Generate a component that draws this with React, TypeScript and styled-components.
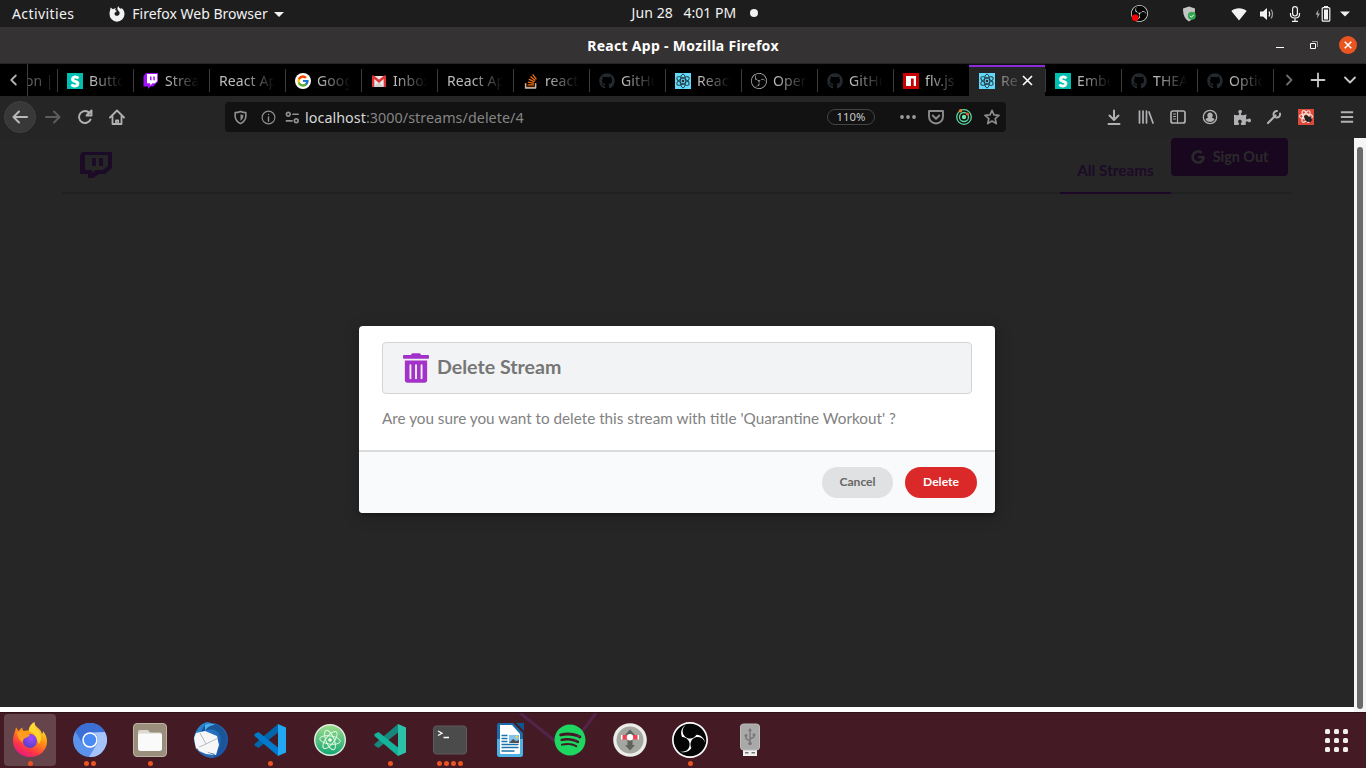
import React from "react";
import styled, { createGlobalStyle } from "styled-components";
import { FaGithub, FaGoogle, FaTrashAlt, FaPuzzlePiece, FaSpotify, FaStackOverflow } from "react-icons/fa";
import { FcGoogle } from "react-icons/fc";
import { SiObsstudio } from "react-icons/si";

const Global = createGlobalStyle`
  * { box-sizing: border-box; }
  body { margin: 0; background: #262626; overflow: hidden; }
  svg { display: block; flex: none; }
`;

const Desktop = styled.div`
  width: 1366px;
  height: 768px;
  display: flex;
  flex-direction: column;
  font-family: "Noto Sans", "Open Sans", sans-serif;
  color: #f2f2f2;
`;

/* ---------- system bar ---------- */
const SystemBar = styled.header`
  height: 27px;
  flex: none;
  display: grid;
  grid-template-columns: 1fr auto 1fr;
  align-items: center;
  background: #1d1d1d;
  font-size: 14px;
  line-height: 26px;
  white-space: pre;
`;
const SystemLeft = styled.div`
  display: flex;
  align-items: center;
  padding-left: 12px;
`;
const SystemLabel = styled.span<{ $w: number; $ls?: number }>`
  width: ${(p) => p.$w}px;
  letter-spacing: ${(p) => p.$ls ?? 0}px;
`;
const Clock = styled.div`
  display: flex;
  align-items: center;
  padding-left: 23px;
  padding-bottom: 1px;
`;
const ClockDot = styled.i`
  width: 8px;
  height: 8px;
  border-radius: 50%;
  background: #f2f2f2;
  margin-left: 13px;
`;
const Tray = styled.div`
  display: flex;
  justify-content: flex-end;
  align-items: center;
  padding-right: 2px;
`;
const TrayCell = styled.span<{ $w: number }>`
  width: ${(p) => p.$w}px;
  height: 27px;
  flex: none;
  display: flex;
  align-items: center;
  justify-content: center;
`;

/* ---------- window title ---------- */
const TitleBar = styled.div`
  height: 37px;
  flex: none;
  display: grid;
  grid-template-columns: 1fr auto 1fr;
  align-items: center;
  background: #353233;
  border-bottom: 1px solid #252323;
`;
const WindowTitle = styled.h1`
  grid-column: 2;
  margin: 0;
  font-size: 14px;
  font-weight: 700;
  color: #fff;
  letter-spacing: 0.3px;
`;
const WindowButtons = styled.div`
  display: flex;
  justify-content: flex-end;
  padding-right: 1px;
`;
const WindowButton = styled.span`
  width: 34px;
  display: flex;
  justify-content: center;
  align-items: center;
`;

/* ---------- tabs ---------- */
const TabStrip = styled.nav`
  height: 32px;
  flex: none;
  display: flex;
  background: #000;
  font-size: 14px;
`;
const StripButton = styled.span<{ $w: number; $line?: boolean }>`
  width: ${(p) => p.$w}px;
  flex: none;
  display: flex;
  align-items: center;
  justify-content: center;
  border-right: ${(p) => (p.$line ? "1px solid #3d3d3d" : "0")};
`;
const TabEnd = styled.span`
  width: 1px;
  height: 23px;
  margin-top: 5px;
  background: #3a3a3a;
`;
const PartialTab = styled.span`
  width: 29px;
  line-height: 33px;
  overflow: hidden;
  color: #5c5c5c;
  white-space: pre;
  text-indent: -3px;
  mask-image: linear-gradient(90deg, #000 30%, rgba(0, 0, 0, 0.4) 75%);
`;
const Tab = styled.div<{ $active?: boolean }>`
  width: 76px;
  flex: none;
  display: flex;
  align-items: center;
  gap: ${(p) => (p.$active ? 5 : 6)}px;
  padding: 0 ${(p) => (p.$active ? 12 : 9)}px 0 9px;
  background: ${(p) => (p.$active ? "#252525" : "linear-gradient(#3a3a3a, #3a3a3a) 0 5px / 1px 23px no-repeat #000")};
  box-shadow: ${(p) => (p.$active ? "inset 0 1px 0 #111, inset 0 3px 0 #8a2bd8" : "none")};
`;
const TabIcon = styled.span`
  width: 16px;
  height: 16px;
  margin-left: 1px;
  margin-top: 2px;
  flex: none;
  display: flex;
  align-items: center;
  justify-content: center;
`;
const TabTitle = styled.span<{ $bare?: boolean; $active?: boolean }>`
  flex: 1;
  min-width: 0;
  overflow: hidden;
  white-space: nowrap;
  line-height: 20px;
  padding-top: 1px;
  padding-left: ${(p) => (p.$bare || p.$active ? 1 : 0)}px;
  letter-spacing: 0.1px;
  color: #bdbdbd;
  mask-image: ${(p) =>
    p.$active
      ? "linear-gradient(90deg, rgba(0, 0, 0, 0.75), rgba(0, 0, 0, 0.25))"
      : "linear-gradient(90deg, #000 calc(100% - 32px), transparent calc(100% - 1px))"};
`;

/* ---------- toolbar ---------- */
const Toolbar = styled.div`
  height: 42px;
  flex: none;
  display: flex;
  align-items: center;
  background: #252525;
  padding-left: 4px;
`;
const Cell = styled.span<{ $w?: number }>`
  width: ${(p) => p.$w ?? 32}px;
  height: 32px;
  flex: none;
  display: flex;
  align-items: center;
  justify-content: center;
`;
const BackButton = styled(Cell)`
  border-radius: 50%;
  background: #383838;
  border: 1px solid #404040;
`;
const AddressBar = styled.div`
  width: 781px;
  height: 30px;
  flex: none;
  margin-left: 91px;
  display: flex;
  align-items: center;
  background: #121212;
  border-radius: 4px;
  padding-left: 3px;
`;
const Address = styled.span`
  flex: 1;
  margin-left: 5px;
  font-size: 14.3px;
  letter-spacing: 0.06px;
  color: #858585;
  white-space: nowrap;
  b { font-weight: 400; color: #d8d8d8; }
`;
const Zoom = styled.span`
  width: 48px;
  height: 16px;
  margin-right: 19px;
  border: 1px solid #444;
  border-radius: 8px;
  color: #c9c9c9;
  font-size: 11.3px;
  line-height: 14px;
  text-align: center;
`;
const Tools = styled.div`
  margin-left: 92px;
  display: flex;
`;

/* ---------- page ---------- */
const Viewport = styled.div`
  height: 574px;
  flex: none;
  display: flex;
  background: #fff;
`;
const Page = styled.main`
  position: relative;
  width: 1354px;
  height: 569px;
  background: #262626;
  font-family: Lato, sans-serif;
`;
const ScrollTrack = styled.div`
  width: 12px;
  background: #f5f5f5;
  padding: 9px 3px 3px;
`;
const ScrollThumb = styled.div`
  height: 562px;
  width: 6px;
  border-radius: 3px;
  background: #6b6b6b;
`;
const Menu = styled.div`
  width: 1230px;
  height: 56px;
  margin-left: 62px;
  padding: 0 4px 0 18px;
  border-bottom: 2px solid #212121;
  display: flex;
  align-items: flex-start;
`;
const Brand = styled.div`
  flex: 1;
  padding-top: 13px;
`;
const ActiveItem = styled.a`
  width: 111px;
  height: 56px;
  border-bottom: 2px solid #1c0826;
  color: #1c0b26;
  font-size: 15.3px;
  font-weight: 700;
  line-height: 20px;
  padding-top: 22px;
  text-align: center;
`;
const SignOut = styled.button`
  width: 117px;
  height: 38px;
  border: 0;
  border-radius: 4px;
  background: #190720;
  color: #2a2a2a;
  font: 700 14.4px Lato, sans-serif;
  display: flex;
  align-items: center;
  justify-content: center;
  gap: 8px;
  padding: 0 0 1px;
`;
const Dimmer = styled.div`
  position: absolute;
  inset: 0 0 6px;
  display: flex;
  align-items: center;
  justify-content: center;
`;
const Modal = styled.section`
  width: 636px;
  height: 187px;
  border-radius: 4px;
  overflow: hidden;
  background: #fff;
  box-shadow: 1px 3px 3px rgba(0, 0, 0, 0.2), 1px 3px 15px 2px rgba(0, 0, 0, 0.2);
  display: flex;
  flex-direction: column;
`;
const ModalBody = styled.div`
  flex: 1;
  padding: 16px 23px 0;
`;
const ModalHeader = styled.h2`
  margin: 0;
  height: 52px;
  border: 1px solid #d4d4d5;
  border-radius: 4px;
  background: #f2f3f5;
  color: #767676;
  font-size: 19.6px;
  font-weight: 700;
  display: flex;
  align-items: center;
  gap: 8px;
  padding-left: 20px;
  span { padding-bottom: 4px; }
`;
const TrashIcon = styled(FaTrashAlt)`
  width: 26px;
  height: 30px;
`;
const Question = styled.p`
  margin: 13px 0 0;
  font-size: 15.28px;
  line-height: 22px;
  color: #828282;
`;
const Actions = styled.footer`
  height: 63px;
  border-top: 2px solid #dadada;
  background: #f9fafb;
  display: flex;
  justify-content: flex-end;
  gap: 12px;
  padding: 15px 18px 0 0;
`;
const PillButton = styled.button<{ $danger?: boolean }>`
  width: ${(p) => (p.$danger ? 72 : 71)}px;
  height: 31px;
  border: 0;
  border-radius: 16px;
  padding: 0 0 3px;
  background: ${(p) => (p.$danger ? "#db2828" : "#e0e1e2")};
  color: ${(p) => (p.$danger ? "#fff" : "#666")};
  font: 700 12.1px Lato, sans-serif;
`;

/* ---------- dock ---------- */
const Dock = styled.footer`
  position: relative;
  height: 56px;
  flex: none;
  display: flex;
  align-items: flex-start;
  background: #441b24;
  border-top: 1px solid #2e1419;
  padding-top: 1px;
`;
const Streaks = styled.svg`
  position: absolute;
  left: 515px;
  top: 0;
`;
const DockItem = styled.div<{ $active?: boolean }>`
  position: relative;
  width: 52px;
  height: 52px;
  margin: 0 4px;
  border-radius: 4px;
  background: ${(p) => (p.$active ? "#66444b" : "transparent")};
  display: flex;
  align-items: center;
  justify-content: center;
`;
const Running = styled.span`
  position: absolute;
  left: 0;
  right: 0;
  bottom: 0;
  display: flex;
  justify-content: center;
  gap: 2px;
`;
const RunDot = styled.i`
  width: 5px;
  height: 5px;
  border-radius: 50%;
  background: #e95420;
`;
const AppsGrid = styled.div`
  margin: 15px 18px 0 auto;
  display: grid;
  grid-template-columns: repeat(3, 5px);
  gap: 4px;
  i { width: 5px; height: 5px; border-radius: 1.5px; background: #f3efee; }
`;

const S = (p: { s?: number; children: React.ReactNode }) => (
  <svg width={p.s ?? 16} height={p.s ?? 16} viewBox="0 0 16 16" fill="none" stroke="#b1b1b3" strokeWidth="2" strokeLinecap="round" strokeLinejoin="round">
    {p.children}
  </svg>
);

const Atom = ({ s, color, w = 1.2 }: { s: number; color: string; w?: number }) => (
  <svg width={s} height={s} viewBox="-12 -12 24 24" fill="none" stroke={color} strokeWidth={w}>
    {[0, 60, 120].map((a) => (
      <ellipse key={a} rx="11.300" ry="4.500" transform={`rotate(${a})`} />
    ))}
    <circle r="1.5" fill={color} />
  </svg>
);

const ReactFavicon = () => (
  <svg width="16" height="16" viewBox="-8 -8 16 16" fill="none" stroke="#20343c" strokeWidth="0.9">
    <path d="M-8-8H8V8H-8z" fill="#61dafb" stroke="none" />
    {[30, 90, 150].map((a) => (
      <ellipse key={a} rx="6.900" ry="2.700" transform={`rotate(${a})`} />
    ))}
    <circle r="1.3" fill="#20343c" stroke="none" />
  </svg>
);

const SemanticBox = styled.span`
  width: 16px;
  height: 16px;
  background: #00bfb0;
  color: #fff;
  font: 900 15px/16px Lato, sans-serif;
  text-align: center;
  -webkit-text-stroke: 0.8px #fff;
`;

const TwitchFavicon = () => (
  <svg width="16" height="16" viewBox="0 0 16 16">
    <path d="M3 0h12v8.500l-5 5H7.500L5 16v-2.500H0.500V3z" fill="#a010ff" />
    <path d="M4 1h10.200v7L12 10.300H9.500L7.200 12.500v-2.200H4z" fill="#fff" />
    <path d="M7 3.500h1.500v3.700H7zM10.300 3.500h1.500v3.700h-1.500z" fill="#a010ff" />
  </svg>
);

const GmailFavicon = () => (
  <svg width="16" height="16" viewBox="0 0 16 16">
    <path d="M1 3h14v11H1z" fill="#e8e8e8" />
    <path d="M3 14L8 9l5 5z" fill="#cfcfcf" />
    <path d="M1 2.500h2l5 4.300 5-4.300h2V14h-2.300V6L8 10 3.300 6v8H1z" fill="#dd3535" />
  </svg>
);

const GoogleFavicon = () => (
  <svg width="16" height="16" viewBox="0 0 16 16">
    <circle cx="8" cy="8" r="8" fill="#fff" />
    <g transform="translate(1.300 1.300)"><FcGoogle size={13.4} /></g>
  </svg>
);

const NpmFavicon = () => (
  <svg width="16" height="16" viewBox="0 0 16 16">
    <path d="M0 0h16v16H0z" fill="#cb0000" />
    <path d="M3 3h10v10h-2.300V5.500H8V13H3z" fill="#fff" />
  </svg>
);

const StackFavicon = () => (
  <svg width="16" height="16" viewBox="0 0 16 16">
    <FaStackOverflow size={16} color="#f2700f" />
    <path d="M2.500 10.500V15h10v-4.500" fill="none" stroke="#b8b8b8" strokeWidth="1.300" />
  </svg>
);

const ObsBadge = ({ s, color, rec }: { s: number; color: string; rec?: boolean }) => (
  <svg width={s} height={s} viewBox="0 0 24 24">
    <circle cx="12" cy="12" r="11.500" fill="#050505" />
    <SiObsstudio size={24} color={color} />
    {rec && <circle cx="6" cy="18" r="4.500" fill="#f00" />}
  </svg>
);

type TabInfo = { title: string; icon?: React.ReactNode };
const gh = <FaGithub size={16} color="#24292e" />;
const tabs: TabInfo[] = [
  { title: "Button", icon: <SemanticBox>S</SemanticBox> },
  { title: "Streams", icon: <TwitchFavicon /> },
  { title: "React App" },
  { title: "Google", icon: <GoogleFavicon /> },
  { title: "Inbox", icon: <GmailFavicon /> },
  { title: "React App" },
  { title: "reactj", icon: <StackFavicon /> },
  { title: "GitHub", icon: gh },
  { title: "React", icon: <ReactFavicon /> },
  { title: "Open", icon: <ObsBadge s={16} color="#b0b0b0" /> },
  { title: "GitHub", icon: gh },
  { title: "flv.js", icon: <NpmFavicon /> },
];
const tabsAfter: TabInfo[] = [
  { title: "Embe", icon: <SemanticBox>S</SemanticBox> },
  { title: "THEA", icon: gh },
  { title: "Optio", icon: gh },
];

const TabView = ({ title, icon }: TabInfo) => (
  <Tab>
    {icon && <TabIcon>{icon}</TabIcon>}
    <TabTitle $bare={!icon}>{title}</TabTitle>
  </Tab>
);

/* ---------- dock icons ---------- */
const Firefox = () => (
  <svg width="36" height="36" viewBox="0 0 36 36">
    <defs>
      <linearGradient id="ff" x1="0.8" y1="0" x2="0.25" y2="1">
        <stop offset="0" stopColor="#fff44f" />
        <stop offset="0.4" stopColor="#ff980e" />
        <stop offset="0.75" stopColor="#ff3647" />
        <stop offset="1" stopColor="#e31587" />
      </linearGradient>
      <radialGradient id="fp" cx="0.6" cy="0.3" r="0.7">
        <stop offset="0" stopColor="#a24bff" />
        <stop offset="1" stopColor="#5a3fc8" />
      </radialGradient>
    </defs>
    <path d="M4 5.500C5 6 6 8 6.500 9.500c1-1.800 2.500-3.200 4-4-.4 1.500.1 2.700 1 3.500 1.500-.5 3.500-.8 5-.3C17 5 19 2 22.500 0c0 3 1.500 4.500 4 6.500 2 1.700 3 3.300 3.500 5.500.8-.8 1-2 1-3 3 3.500 4 7 4 10.500C35 28.500 27.500 35 18 35S1 28 1 18.500C1 13.500 3 10 4 5.500z" fill="url(#ff)" />
    <path d="M22.500 0c-2 5 2 7 4.500 10s3 8 0 12l-5-10-5-3C17 5 19 2 22.500 0z" fill="#ffdf35" opacity=".8" />
    <circle cx="18" cy="19" r="7" fill="url(#fp)" />
    <path d="M5 11c3-3 6-3 8-1l5 3c-1.500 2-4 2.500-5.500 3.500-1.500 1-2 2-1.500 4C8 19 5 15 5 11z" fill="#ff9b1f" />
  </svg>
);
const Chromium = () => (
  <svg width="34" height="34" viewBox="-17 -17 34 34">
    <circle r="17" fill="#5b93ec" />
    <path d="M-14.700-8.500A17 17 0 0 1 14.700-8.500L14.700-7.500H0A8 8 0 0 0-7 4z" fill="#3b6fd6" />
    <path d="M14.900-8A17 17 0 0 1-1 17L7 4A8 8 0 0 0 3-7.500z" fill="#a5c5fa" />
    <circle r="7.700" fill="#fff" />
    <circle r="6.200" fill="#4a8af4" />
  </svg>
);
const Files = () => (
  <svg width="34" height="34" viewBox="0 0 34 34">
    <rect x=".5" y=".5" width="33" height="33" rx="3.500" fill="#9a8f7d" stroke="#bdb4a4" />
    <path d="M5 9q0-2 2-2h8l2 2.500h10q2 0 2 2V17H5z" fill="#ddd8d2" />
    <rect x="5" y="10.500" width="24" height="17.500" rx="2.500" fill="#fafafa" />
  </svg>
);
const Thunderbird = () => (
  <svg width="38" height="38" viewBox="0 0 38 38">
    <defs>
      <linearGradient id="tb" x1="0" y1="0" x2="1" y2="1">
        <stop offset="0" stopColor="#2b8fdc" />
        <stop offset="1" stopColor="#17499c" />
      </linearGradient>
    </defs>
    <path d="M6 9C8 5 12 1.500 17 1l3 1c9 0 17 7 17 16 0 11-7 18-15 19-4-.5-8-2-11-5L4 24C2 19 3 13 6 9z" fill="url(#tb)" />
    <path d="M19 2c-5 1-8 5-9 10 5-4 12-5 17-1 4 4 4 12 1 20 6-4 9-11 7-17C33 7 27 2 19 2z" fill="#1b5596" />
    <path d="M14 4c3-2 7-2 10 0-4 0-8 2-10 6z" fill="#4bb0ee" />
    <path d="M3 17l2-5 9-2 12 5 2 9-3 10-9-1-11-5z" fill="#f7f7f8" />
    <path d="M9 12l6 11 12-6M15 23l-9 4" fill="none" stroke="#b6bac4" strokeWidth="1" />
    <path d="M5 27l6 2 5 2 8 2-2 4c-7 0-14-4-17-10z" fill="#2a68b4" />
    <path d="M5 25l5 2 8 5 6 2-9-1-7-3z" fill="#f7f7f8" />
  </svg>
);
const Code = ({ dark, mid, light }: { dark: string; mid: string; light: string }) => (
  <svg width="32" height="32" viewBox="0 0 32 32">
    <path d="M24 0v8.500L4.500 24 0.500 21.500V20z" fill={dark} />
    <path d="M0.500 10L4.500 8 24 23.500V32L0.500 12z" fill={mid} />
    <path d="M24 0l8 3.500v25L24 32z" fill={light} />
  </svg>
);
const AtomEditor = () => (
  <svg width="34" height="34" viewBox="0 0 34 34">
    <defs>
      <linearGradient id="at" x1="0" y1="0" x2="0" y2="1">
        <stop offset="0" stopColor="#9fdc8c" />
        <stop offset="1" stopColor="#12a674" />
      </linearGradient>
    </defs>
    <circle cx="17" cy="17" r="15.300" fill="url(#at)" stroke="#e3ece2" strokeWidth="1.400" />
    <g transform="translate(6 6) rotate(8 11 11)"><Atom s={22} color="#e8fbe8" w={1} /></g>
  </svg>
);
const Terminal = () => (
  <svg width="34" height="30" viewBox="0 0 34 30">
    <rect x=".5" y="1" width="33" height="28" rx="3" fill="#4b4b4b" stroke="#5d5d5d" />
    <path d="M5 6l4 2.200L5 10.500M10.500 12.500h5.500" fill="none" stroke="#fff" strokeWidth="1.300" />
  </svg>
);
const Writer = () => (
  <svg width="28" height="36" viewBox="0 0 28 36">
    <path d="M3 1h14l10 10v21q0 3-3 3H4q-3 0-3-3V4q0-3 2-3z" fill="#1a6ba8" />
    <path d="M1 17h26v15q0 3-3 3H4q-3 0-3-3z" fill="#4fb0e6" />
    <path d="M20 1h8v8z" fill="#0e568f" />
    <path d="M4 3h12l8 9v19q0 1-1 1H5q-1 0-1-1z" fill="#fff" />
    <path d="M5.500 13.500h6M5.500 16.500h6M5.500 19.500h6M5.500 22.500h17M5.500 25.500h17M5.500 29h13" stroke="#1873ad" strokeWidth="1.300" />
    <path d="M13 13h10v8H13z" fill="#7ec4ef" />
    <path d="M13 21l4-4 3 2 3-1v3z" fill="#505050" />
    <circle cx="20.500" cy="15" r="1.200" fill="#fad13c" />
  </svg>
);
const Scroller = () => (
  <svg width="34" height="34" viewBox="0 0 34 34">
    <circle cx="17" cy="17" r="16.800" fill="#ececea" />
    <circle cx="17" cy="17" r="13.500" fill="#a4a7a0" />
    <path d="M17 6.500l5 5.500h-2.500v10H22l-5 5.500-5-5.500h2.500V12H12z" fill="#5f625d" />
    <path d="M8.500 12h17v4.500h-17z" fill="#ee4253" />
    <path d="M8 12h1.500v4.500H8zM24.500 12H26v4.500h-1.500z" fill="#fff" />
    <circle cx="17" cy="14.200" r="3.200" fill="#fff" />
  </svg>
);
const Usb = () => (
  <svg width="20" height="34" viewBox="0 0 20 34">
    <path d="M3 26h14v7H3z" fill="#f1f1f1" />
    <path d="M5 29h3.500v1.500H5zM11.500 29H15v1.500h-3.500z" fill="#777" />
    <rect x=".5" y="1" width="19" height="26" rx="3" fill="#a9a9a9" stroke="#bcbcbc" />
    <path d="M10 7v13.500M10 18l-4-2.500v-3M10 16l4-2v-2.500" fill="none" stroke="#777" strokeWidth="1.400" />
    <path d="M10 5l2 3H8zM12.700 10.500h2.600v2.500h-2.600z" fill="#777" />
    <circle cx="10" cy="20.500" r="1.800" fill="#777" />
    <circle cx="6" cy="12.500" r="1.500" fill="#777" />
  </svg>
);

const apps = [
  { icon: <Firefox />, dots: 1, active: true },
  { icon: <Chromium />, dots: 2 },
  { icon: <Files />, dots: 1 },
  { icon: <Thunderbird />, dots: 0 },
  { icon: <Code dark="#0065a9" mid="#007acc" light="#22a7f2" />, dots: 1 },
  { icon: <AtomEditor />, dots: 0 },
  { icon: <Code dark="#16877a" mid="#16b39b" light="#2cc2aa" />, dots: 1 },
  { icon: <Terminal />, dots: 4 },
  { icon: <Writer />, dots: 0 },
  { icon: <FaSpotify size={32} color="#1ed760" />, dots: 0 },
  { icon: <Scroller />, dots: 0 },
  { icon: <ObsBadge s={36} color="#fff" />, dots: 1 },
  { icon: <Usb />, dots: 0 },
];

export default function App() {
  return (
    <Desktop>
      <Global />
      <SystemBar>
        <SystemLeft>
          <SystemLabel $w={97} $ls={0.4}>Activities</SystemLabel>
          <svg width="16" height="16" viewBox="0 0 16 16">
            <path d="M1.500 1.500L4 3.200C5 2.500 6 2.200 7 2.200L6 4l2 1-2 1.500c-.6.6-.7 2 .2 2.700 1.200 1 3.800.6 4.300-1.200.4-1.500-.2-2.600-1.400-3.500C8 3.300 8.300 1.500 9.300 0c.2 1.500 1.500 2 2.700 3l.5-1c2 1.500 3.200 3.700 3 6.300A7.500 7.500 0 0 1 .5 8C.400 5.500 1.500 4 1.500 1.500z" fill="#f2f2f2" />
          </svg>
          <SystemLabel $w={144}>{"  Firefox Web Browser"}</SystemLabel>
          <svg width="20" height="10" viewBox="0 0 20 10"><path d="M5 3h10l-5 5z" fill="#f2f2f2" /></svg>
        </SystemLeft>
        <Clock>
          <SystemLabel $w={52} $ls={0.1}>Jun 28</SystemLabel>
          <SystemLabel $w={53}>4:01 PM</SystemLabel>
          <ClockDot />
        </Clock>
        <Tray>
          <TrayCell $w={50}><ObsBadge s={17} color="#d8d8d8" rec /></TrayCell>
          <TrayCell $w={50}>
            <svg width="16" height="16" viewBox="0 0 16 16">
              <path d="M8 .5l6 2c0 7-2 10.500-6 13-4-2.500-6-6-6-13z" fill="#c4c4c4" />
              <circle cx="10.800" cy="9.800" r="4" fill="#33a852" />
              <path d="M9 9.800l1.400 1.400 2.300-2.400" fill="none" stroke="#fff" />
            </svg>
          </TrayCell>
          <TrayCell $w={50}>
            <svg width="16" height="14" viewBox="0 0 16 14"><path d="M.3 4C4.500.3 11.500.3 15.700 4L8 13.500z" fill="#f2f2f2" /></svg>
          </TrayCell>
          <TrayCell $w={6}>
            <svg width="16" height="16" viewBox="0 0 16 16" fill="none" stroke="#f2f2f2">
              <path d="M1 5.500h3L8 2v12l-4-3.500H1z" fill="#f2f2f2" stroke="none" />
              <path d="M10 5.500q1.500 2.500 0 5" strokeWidth="1.400" />
              <path d="M12 3.500q3 4.500 0 9" stroke="#999" strokeWidth="1.300" />
            </svg>
          </TrayCell>
          <TrayCell $w={50}>
            <svg width="14" height="16" viewBox="0 0 14 16" fill="none" stroke="#f2f2f2" strokeWidth="1.200">
              <rect x="4.600" y=".7" width="4.800" height="9.300" rx="2.400" />
              <path d="M2.500 7v1.500q0 3.500 4.500 3.500t4.500-3.500V7M7 12v3M4 15.300h6" />
            </svg>
          </TrayCell>
          <TrayCell $w={6}>
            <svg width="18" height="16" viewBox="0 0 18 16">
              <path d="M4.500 3.500L1.500 8.500h2L3 12.500 6 7.500H4z" fill="#aaa" />
              <path d="M10 0h4v2h-4z" fill="#f2f2f2" />
              <rect x="8.200" y="1.700" width="7.600" height="13.500" rx="1" fill="none" stroke="#f2f2f2" strokeWidth="1.200" />
              <path d="M10 3.500h4v10h-4z" fill="#f2f2f2" />
            </svg>
          </TrayCell>
          <TrayCell $w={38}>
            <svg width="10" height="6" viewBox="0 0 10 6"><path d="M0 .5h10l-5 5z" fill="#f2f2f2" /></svg>
          </TrayCell>
        </Tray>
      </SystemBar>

      <TitleBar>
        <WindowTitle>React App - Mozilla Firefox</WindowTitle>
        <WindowButtons>
          <WindowButton>
            <svg width="8" height="8" viewBox="0 0 8 8"><path d="M0 6h8v1H0z" fill="#fff" /></svg>
          </WindowButton>
          <WindowButton>
            <svg width="8" height="8" viewBox="0 0 8 8" fill="none">
              <path d="M2 .5h5.500V6" stroke="#999" />
              <path d="M.5 2.500h5v5h-5z" stroke="#fff" />
            </svg>
          </WindowButton>
          <WindowButton>
            <svg width="18" height="18" viewBox="0 0 18 18">
              <circle cx="9" cy="9" r="9" fill="#e95420" />
              <path d="M5.700 5.700l6.600 6.600M12.300 5.700l-6.600 6.600" stroke="#fff" strokeWidth="1.500" />
            </svg>
          </WindowButton>
        </WindowButtons>
      </TitleBar>

      <TabStrip>
        <StripButton $w={28} $line>
          <S><path d="M9.800 3.500L5.300 8l4.500 4.500" strokeWidth="1.800" /></S>
        </StripButton>
        <PartialTab>on |</PartialTab>
        {tabs.map((t, i) => <TabView key={i} {...t} />)}
        <Tab $active>
          <TabIcon><ReactFavicon /></TabIcon>
          <TabTitle $active>Re</TabTitle>
          <svg width="11" height="11" viewBox="0 0 11 11"><path d="M1 1l9 9M10 1l-9 9" stroke="#fff" strokeWidth="1.600" /></svg>
        </Tab>
        {tabsAfter.map((t, i) => <TabView key={i} {...t} />)}
        <TabEnd />
        <StripButton $w={29}>
          <S><path d="M6 3.500L10.500 8 6 12.500" stroke="#6e6e6e" strokeWidth="1.800" /></S>
        </StripButton>
        <StripButton $w={30}>
          <S><path d="M8 1.500v13M1.500 8h13" stroke="#c9c9c9" strokeWidth="1.800" /></S>
        </StripButton>
        <StripButton $w={33}>
          <S><path d="M3 5.500L8 10.500l5-5" stroke="#c9c9c9" strokeWidth="1.800" /></S>
        </StripButton>
      </TabStrip>

      <Toolbar>
        <BackButton><S><path d="M15 8H1.500M7 2.500L1.500 8 7 13.500" stroke="#b9b9bb" /></S></BackButton>
        <Cell $w={34}><S><path d="M1 8h13.500M9 2.500L14.500 8 9 13.500" stroke="#5c5c5e" /></S></Cell>
        <Cell $w={30}><S><path d="M13.500 10.500A6 6 0 1 1 12.500 4M14.500 1.500V6.500H9.500z" strokeWidth="1.900" /></S></Cell>
        <Cell $w={34}>
          <S><path d="M1 8.500L8 1.500l7 7M3.500 7.500V15h9V7.500M7 15v-3.500h2.200V15" strokeWidth="1.800" /></S>
        </Cell>
        <AddressBar>
          <Cell $w={24}>
            <S s={15}><path d="M8 1.500q3 1.300 5.700 1.300v4.500Q13 12 8 14.500 3 12 2.300 7.300V2.800Q5 2.800 8 1.500z" stroke="#909090" strokeWidth="1.700" /><path d="M8 4.500q1.300.7 3 .8v2Q10.500 10 8 11.500z" fill="#909090" stroke="none" /></S>
          </Cell>
          <Cell $w={33}>
            <S s={15}><circle cx="8" cy="8" r="6.800" stroke="#909090" strokeWidth="1.200" /><path d="M8 7.500V12M8 4.700v.1" stroke="#909090" strokeWidth="1.500" /></S>
          </Cell>
          <Cell $w={15}>
            <S s={15}><g stroke="#909090" strokeWidth="1.800"><circle cx="3.500" cy="4.500" r="2" /><path d="M8.500 4.500H14M1.500 11.500h6" /><circle cx="12" cy="11.500" r="2" /></g></S>
          </Cell>
          <Address><b>localhost</b>:3000/streams/delete/4</Address>
          <Zoom>110%</Zoom>
          <Cell $w={28}><S><g fill="#9a9a9a" stroke="none"><circle cx="2" cy="8" r="1.900" /><circle cx="8" cy="8" r="1.900" /><circle cx="14" cy="8" r="1.900" /></g></S></Cell>
          <Cell $w={28}><S><path d="M1 2h14v5.500a7 7 0 0 1-14 0zM4.700 6.500L8 9.700l3.300-3.200" stroke="#8c8c8c" strokeWidth="1.900" /></S></Cell>
          <Cell $w={28}>
            <S>
              <g stroke="#5cd6a0" strokeWidth="1.300"><circle cx="8" cy="8" r="7.300" /><circle cx="8" cy="8" r="4.500" /></g>
              <circle cx="8" cy="8" r="2.200" fill="#6fe8ae" stroke="none" />
              <circle cx="4.500" cy="1.800" r="1.700" fill="#ee7a29" stroke="none" />
              <circle cx="11.500" cy="5" r="1.600" fill="#f0562b" stroke="none" />
            </S>
          </Cell>
          <Cell $w={28}><S><path d="M8 1.300l2 4.600 5 .5-3.800 3.300 1.100 4.900L8 12.100l-4.300 2.500 1.100-4.900L1 6.400l5-.5z" stroke="#8c8c8c" strokeWidth="1.700" /></S></Cell>
        </AddressBar>
        <Tools>
          <Cell><S><path d="M8 1.500V10M3.500 6.500L8 11l4.500-4.500M2.500 15h11" /></S></Cell>
          <Cell><S><path d="M1.500 2v12M5 2v12M8.500 2v12M11 3l4 11" strokeWidth="1.700" /></S></Cell>
          <Cell><S><rect x="1" y="2" width="14" height="12" rx="2" strokeWidth="1.700" /><path d="M7.500 2v12M3.500 5h2M3.500 7.500h2M3.500 10h2" strokeWidth="1.100" /></S></Cell>
          <Cell><S><circle cx="8" cy="8" r="6.700" strokeWidth="1.300" /><path d="M8 3.500a2.800 2.800 0 0 1 1.700 5q2.300.5 2.800 2.300Q10.500 13 8 13t-4.500-2.200Q4 9 6.300 8.500A2.800 2.800 0 0 1 8 3.500z" fill="#b1b1b3" stroke="none" /></S></Cell>
          <Cell><FaPuzzlePiece size={17} color="#b1b1b3" /></Cell>
          <Cell><S><path d="M2 14L9.500 6.500" strokeWidth="2.200" /><path d="M14 4.500A3.300 3.300 0 1 1 11 2" strokeWidth="2" /></S></Cell>
          <Cell>
            <S>
              <path d="M0 0h16v16H0z" fill="#d94a3a" stroke="none" />
              <g stroke="#fbe3df" strokeWidth="1.100">
                <ellipse cx="8" cy="7.500" rx="6.500" ry="2.500" />
                <ellipse cx="8" cy="7.500" rx="6.500" ry="2.500" transform="rotate(60 8 7.500)" />
                <ellipse cx="8" cy="7.500" rx="6.500" ry="2.500" transform="rotate(120 8 7.500)" />
              </g>
              <path d="M6 7l2.500-1 2 1.500L13 8l1 3-1.500 2.500-2-1L9 13l-2-2z" fill="#222" stroke="none" />
            </S>
          </Cell>
          <Cell $w={50}><S s={14}><path d="M1 2.500h14M1 8h14M1 13.500h14" strokeLinecap="butt" strokeWidth="2.200" /></S></Cell>
        </Tools>
      </Toolbar>

      <Viewport>
        <Page>
          <Menu>
            <Brand>
              <svg width="33" height="28" viewBox="0 0 33 28">
                <path fillRule="evenodd" d="M2 1h30v16l-7 6h-6l-6 4H8v-4H0V4zM5 4v15h7v3l4-3h7l5-4V4z" fill="#1c0b26" />
                <path d="M12 7h4v8h-4zM19 7h4v8h-4z" fill="#1c0b26" />
              </svg>
            </Brand>
            <ActiveItem>All Streams</ActiveItem>
            <SignOut><FaGoogle size={14} />Sign Out</SignOut>
          </Menu>
          <Dimmer>
            <Modal>
              <ModalBody>
                <ModalHeader>
                  <TrashIcon color="#a333c8" />
                  <span>Delete Stream</span>
                </ModalHeader>
                <Question>Are you sure you want to delete this stream with title 'Quarantine Workout' ?</Question>
              </ModalBody>
              <Actions>
                <PillButton>Cancel</PillButton>
                <PillButton $danger>Delete</PillButton>
              </Actions>
            </Modal>
          </Dimmer>
        </Page>
        <ScrollTrack><ScrollThumb /></ScrollTrack>
      </Viewport>

      <Dock>
        <Streaks width="90" height="40" viewBox="0 0 90 40">
          <path d="M5 0l35 28M81 0L60 28" stroke="#54234a" strokeWidth="3" />
        </Streaks>
        {apps.map((a, i) => (
          <DockItem key={i} $active={a.active}>
            {a.icon}
            <Running>{Array.from({ length: a.dots }, (_, k) => <RunDot key={k} />)}</Running>
          </DockItem>
        ))}
        <AppsGrid>{Array.from({ length: 9 }, (_, i) => <i key={i} />)}</AppsGrid>
      </Dock>
    </Desktop>
  );
}
